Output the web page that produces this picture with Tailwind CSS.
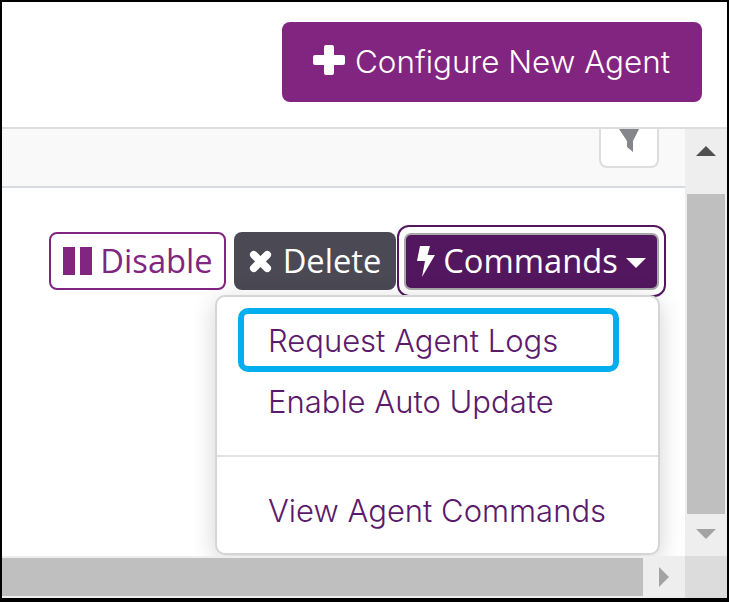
<!DOCTYPE html>
<html lang="en">
<head>
    <meta charset="UTF-8">
    <title>Agents</title>
    <script src="https://cdn.jsdelivr.net/npm/@tailwindcss/browser@4"></script>
</head>
<body class="bg-black">
    <div class="w-[729px] h-[602px] pt-[2px] pl-[2px] pr-[2px] pb-[4px] overflow-hidden">
        <div class="flex flex-col h-full bg-white">
            <!-- header -->
            <header class="flex justify-end items-start h-[127px] pt-[20px] pr-[25px] border-b-2 border-[#dddddd]">
                <button class="flex items-center w-[420px] h-[80px] pl-[31px] pt-[2px] rounded-[8px] bg-[#822581] text-white text-[31.400px] font-light font-['Inter',sans-serif]">
                    <svg class="w-[32px] h-[30px] mr-[10px] -mt-[6px]" viewBox="0 0 32 30"><path fill="#fff" d="M11 2a2 2 0 0 1 2-2h6a2 2 0 0 1 2 2v8h9a2 2 0 0 1 2 2v6a2 2 0 0 1-2 2h-9v8a2 2 0 0 1-2 2h-6a2 2 0 0 1-2-2v-8H2a2 2 0 0 1-2-2v-6a2 2 0 0 1 2-2h9z"/></svg>
                    Configure New Agent
                </button>
            </header>

            <div class="flex flex-1 min-h-0">
                <!-- content -->
                <main class="relative flex-1 min-w-0 flex flex-col">
                    <div class="flex justify-end h-[59px] pr-[26px] bg-[#f9f9f9] border-b-2 border-[#d8dce0]">
                        <div class="flex justify-center w-[60px] h-[39px] bg-white border-2 border-t-0 border-[#dddddd] rounded-b-[8px]">
                            <svg class="w-[20px] h-[24px]" viewBox="0 0 20 24"><path fill="#85858c" d="M0 0h20l-6 12v11l-6-5V12z"/></svg>
                        </div>
                    </div>

                    <div class="flex justify-end items-center h-[72px] mt-[37px] pr-[19px] font-['Open_Sans',sans-serif] text-[32.700px] leading-none">
                        <button class="flex items-center justify-center gap-[8px] w-[177px] h-[58px] mr-[8px] pl-[1px] rounded-[8px] border-2 border-[#822581] bg-white text-[#822581]">
                            <svg class="w-[29px] h-[28px]" viewBox="0 0 29 28"><path fill="#822581" d="M0 0h12v28H0zM17 0h12v28H17z"/></svg>
                            Disable
                        </button>
                        <button class="flex items-center justify-center gap-[11px] w-[162px] h-[58px] mr-[1px] rounded-[8px] bg-[#4b4a54] text-white">
                            <svg class="w-[23px] h-[23px]" viewBox="0 0 24 24"><path stroke="#fff" stroke-width="8" stroke-linecap="round" d="M5 5l14 14M19 5L5 19"/></svg>
                            Delete
                        </button>
                        <div class="flex items-center justify-center w-[269px] h-[72px] rounded-[12px] border-2 border-[#52175f]">
                            <button class="flex items-center justify-center gap-[8px] w-[255px] h-[57px] rounded-[7px] border-2 border-[#a9a9a9] bg-[#52175f] text-white">
                                <svg class="w-[18px] h-[31px]" viewBox="0 0 18 31"><path fill="#fff" d="M3 0h10l-2.500 9H18L5 31l3-16H0z"/></svg>
                                Commands
                                <svg class="w-[20px] h-[10px] mt-[4px]" viewBox="0 0 20 10"><path fill="#fff" d="M0 0h20L10 10z"/></svg>
                            </button>
                        </div>
                    </div>

                    <!-- dropdown -->
                    <div class="absolute left-[213px] top-[166px] w-[445px] h-[260px] pt-[11px] bg-white border-2 border-[#d5d5d5] rounded-[10px] shadow-[0_6px_24px_rgba(0,0,0,0.18)] font-['Inter',sans-serif] font-light text-[31px] leading-none text-[#5b1a6b]">
                        <div class="flex items-center w-[381px] h-[64px] ml-[21px] pl-[24px] -mb-[1px] border-[6px] border-[#05aeef] rounded-[10px]">Request Agent Logs</div>
                        <div class="flex items-center h-[60px] pl-[51px]">Enable Auto Update</div>
                        <div class="mt-[24px] mb-[23px] h-[2px] bg-[#e2e2e2]"></div>
                        <div class="flex items-center h-[60px] pl-[51px]">View Agent Commands</div>
                    </div>
                </main>

                <!-- vertical scrollbar -->
                <aside class="flex flex-col w-[42px] bg-[#eeeeee] relative z-10">
                    <div class="flex justify-center items-start h-[65px] pt-[17px]">
                        <svg class="w-[20px] h-[10px]" viewBox="0 0 20 10"><path fill="#505050" d="M10 0l10 10H0z"/></svg>
                    </div>
                    <div class="mx-[2px] h-[320px] bg-[#bfbfbf]"></div>
                    <div class="flex justify-center items-start h-[40px] pt-[15px]">
                        <svg class="w-[20px] h-[10px]" viewBox="0 0 20 10"><path fill="#a3a3a3" d="M0 0h20L10 10z"/></svg>
                    </div>
                </aside>
            </div>

            <!-- horizontal scrollbar -->
            <div class="flex h-[42px] bg-[#eeeeee] shrink-0 relative z-10">
                <div class="w-[641px] h-[38px] mt-[2px] bg-[#bfbfbf]"></div>
                <div class="flex justify-center items-center w-[42px]">
                    <svg class="w-[10px] h-[20px]" viewBox="0 0 10 20"><path fill="#a3a3a3" d="M0 0l10 10L0 20z"/></svg>
                </div>
                <div class="w-[42px] bg-[#dcdcdc]"></div>
            </div>
        </div>
    </div>
</body>
</html>
